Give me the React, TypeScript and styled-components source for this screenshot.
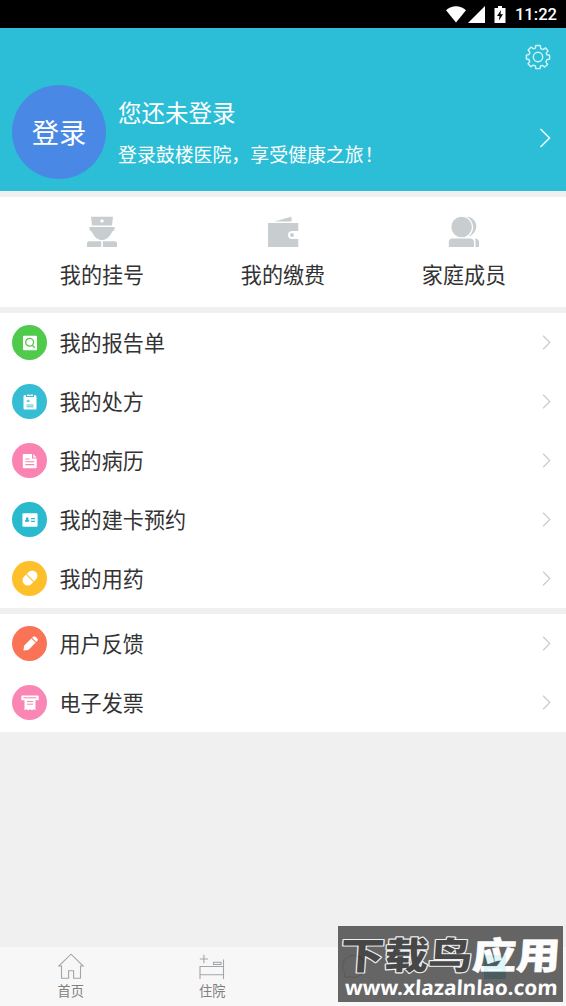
import React from 'react';
import styled, { createGlobalStyle } from 'styled-components';

const GlobalStyle = createGlobalStyle`
    * {
        box-sizing: border-box;
    }

    body {
        margin: 0;
        background-color: #f0f0f0;
        font-family: 'Noto Sans CJK SC', 'Noto Sans', sans-serif;
    }

    svg {
        display: block;
        flex-shrink: 0;
    }
`;

const Screen = styled.div`
    position: relative;
    display: flex;
    flex-direction: column;
    height: 1006px;
    overflow: hidden;
    background-color: #f0f0f0;
`;

const StatusBar = styled.div`
    display: flex;
    align-items: center;
    justify-content: flex-end;
    height: 28px;
    padding-right: 9px;
    background-color: #000;
`;

const Clock = styled.span`
    margin-left: 8px;
    padding-top: 2px;
    font-family: Roboto, sans-serif;
    font-size: 16.6px;
    font-weight: 500;
    line-height: 26px;
    color: #fff;
`;

const Header = styled.header`
    height: 163px;
    padding: 16px 15px 0 12px;
    background-color: #2cbed6;
`;

const HeaderTop = styled.div`
    display: flex;
    justify-content: flex-end;
    height: 41px;
`;

const Profile = styled.div`
    display: flex;
    align-items: center;
    height: 94px;
`;

const Avatar = styled.div`
    display: flex;
    align-items: center;
    justify-content: center;
    width: 94px;
    height: 94px;
    padding-bottom: 2px;
    border-radius: 50%;
    background-color: #4a88e5;
    font-size: 27.3px;
    line-height: 92px;
    color: #fff;
`;

const ProfileText = styled.div`
    flex: 1;
    margin-left: 12px;
    white-space: nowrap;
    color: #fff;
`;

const ProfileName = styled.div`
    font-size: 23.5px;
    line-height: 42px;
`;

const ProfileHint = styled.div`
    padding-top: 1px;
    font-size: 18.9px;
    line-height: 39px;
`;

const Exclamation = styled.span`
    padding-left: 1px;
    font-feature-settings: 'halt';
`;

const HeaderArrow = styled.div`
    padding: 11px 0 0;
`;

const QuickBar = styled.section`
    display: grid;
    grid-template-columns: repeat(3, 181px);
    justify-content: center;
    height: 110px;
    margin-top: 6px;
    padding-top: 18px;
    background-color: #fff;
`;

const QuickItem = styled.div`
    display: flex;
    flex-direction: column;
    align-items: center;
`;

const QuickLabel = styled.span`
    margin-top: 7px;
    font-size: 21.1px;
    line-height: 36px;
    color: #333;
`;

const Menu = styled.section`
    margin-top: 6.4px;
    background-color: #fff;
`;

const MenuRow = styled.div`
    display: flex;
    align-items: center;
    height: 58.9px;
    padding: 0 15px 0 12px;
`;

const MenuIcon = styled.div<{ $color: string }>`
    display: flex;
    align-items: center;
    justify-content: center;
    width: 35px;
    height: 35px;
    border-radius: 50%;
    background-color: ${({ $color }) => $color};
`;

const MenuLabel = styled.span`
    flex: 1;
    margin-left: 12.5px;
    padding-bottom: 1.2px;
    font-size: 21.1px;
    line-height: 36px;
    color: #333;
`;

const TabBar = styled.nav`
    display: grid;
    grid-template-columns: repeat(4, 1fr);
    height: 59px;
    margin-top: auto;
    padding-top: 6px;
    background-color: #f7f7f7;
`;

const Tab = styled.div`
    display: flex;
    flex-direction: column;
    align-items: center;
`;

const TabLabel = styled.span`
    font-size: 13.2px;
    line-height: 22px;
    color: #808080;
`;

const Watermark = styled.div`
    position: absolute;
    left: 338px;
    top: 926px;
    width: 225px;
    height: 76px;
    background-color: #4e4e4e;
    opacity: 0.86;
`;

const PATH_BG = '#c8cdd0';

const WifiIcon = () => (
    <svg width="20" height="17" viewBox="0 0 20 17">
        <path d="M0 4.2C6 -1 14 -1 20 4.2L10 16.5Z" fill="#fff" />
    </svg>
);

const SignalIcon = () => (
    <svg width="19" height="17" viewBox="-2 0 19 17">
        <path d="M0 17L17 0V17Z" fill="#fff" />
    </svg>
);

const BatteryIcon = () => (
    <svg width="22" height="17" viewBox="-9 0 22 17">
        <path d="M4 0H8V2H11.5V17H.5V2H4Z" fill="#fff" />
        <path d="M7 4L3 10H5.5L5 14.5L9 8.2H6.5Z" fill="#000" />
    </svg>
);

const GearIcon = () => (
    <svg width="26" height="26" viewBox="0 0 26 26" fill="none" stroke="#d5f5fa" strokeWidth="1.4" strokeLinejoin="round">
        <path d="M10.8 1.5H15.2L15.8 4.6L18 5.6L20.6 3.8L23 7L21.2 9.1L21.8 10.8L24.6 11.2V15.1L21.9 15.7L20.9 17.9L22.6 20.5L19.6 23L17.3 21.4L15.5 22L15 24.6H10.9L10.4 22L8.2 21.1L5.9 22.8L3 19.8L4.7 17.5L4 15.5L1.4 15V11.1L4 10.5L4.9 8.4L3.2 6L6.2 3.1L8.5 4.8L10.3 4.1Z" />
        <circle cx="13" cy="13" r="4.7" />
    </svg>
);

const Chevron = ({ size, color, weight }: { size: number; color: string; weight: number }) => (
    <svg width={size * 0.6} height={size} viewBox="0 0 12 20" fill="none" stroke={color} strokeWidth={weight}>
        <path d="M1.5 1L10.5 10L1.5 19" />
    </svg>
);

const NurseIcon = () => (
    <svg width="32" height="34" viewBox="0 0 32 34" fill={PATH_BG}>
        <path fillRule="evenodd" d="M5 1.8H27L26 10.5H6ZM16 4.2A1.7 1.7 0 1 0 16 7.6A1.7 1.7 0 1 0 16 4.2Z" />
        <path d="M4.5 12H27.5Q29.5 12.2 28.5 14Q28.3 16.2 26 16.7C24 22 20 25 16 25C12 25 8 22 6 16.7Q3.7 16.2 3.5 14Q2.5 12.2 4.5 12Z" />
        <path d="M3 26.3H15.2V32H1V28.3Q1 26.3 3 26.3ZM16.8 26.3H29Q31 26.3 31 28.3V32H16.8Z" />
    </svg>
);

const WalletIcon = () => (
    <svg width="32" height="34" viewBox="0 0 32 34" fill={PATH_BG}>
        <path d="M7.5 6.6L24.5 1.8V6.6Z" />
        <path d="M1 8H31.3V16H25.5Q21 16.2 21 20Q21 23.8 25.5 24H31.3V32H1Z" />
        <circle cx="25" cy="20" r="1.9" />
    </svg>
);

const FamilyIcon = () => (
    <svg width="32" height="34" viewBox="0 0 32 34" fill={PATH_BG}>
        <circle cx="13.6" cy="12" r="10.3" />
        <path d="M18.5 1.8C31 2.5 31.5 18 20.5 21.8C27.5 16 26.5 6 18.5 1.8Z" />
        <path d="M4.5 23.5H22Q26 23.5 26 27V32H.8V27Q.8 23.5 4.5 23.5ZM27 23.5Q31 23.8 31 27.2V32H27.5V26.5Q27.5 24.8 27 23.5Z" />
    </svg>
);

const ReportGlyph = ({ color }: { color: string }) => (
    <svg width="16" height="16" viewBox="0 0 16 16">
        <rect x="1" y=".7" width="14" height="14.6" rx="1" fill="#fff" />
        <g fill="none" stroke={color} strokeWidth="1.3">
            <circle cx="7.6" cy="7.2" r="3.9" />
            <path d="M10.2 10.2L12.8 12.8" />
        </g>
    </svg>
);

const PrescriptionGlyph = ({ color }: { color: string }) => (
    <svg width="16" height="16" viewBox="0 0 16 16">
        <path d="M2.5 1.2H4V3H12V1.2H13.3Q14.5 1.2 14.5 2.4V14.3Q14.5 15.5 13.3 15.5H2.7Q1.5 15.5 1.5 14.3V2.2Q1.5 1.2 2.5 1.2ZM5 .5H7L8 1.2L9 .5H11V2H5Z" fill="#fff" />
        <path d="M4.5 7H8M6 5.7V8.3M4.5 11H11.5M4.5 12.8H11.5" stroke={color} strokeWidth=".9" />
    </svg>
);

const RecordGlyph = ({ color }: { color: string }) => (
    <svg width="16" height="16" viewBox="0 0 16 16">
        <path d="M1.7 1H10V5.5H14.7V14.3Q14.7 15.2 13.8 15.2H1.7Q.8 15.2 .8 14.3V1.8Q.8 1 1.7 1ZM11.2 1L14.7 4.4H11.2Z" fill="#fff" />
        <path d="M3.3 6H7.5M3.3 8.7H12.3M3.3 11.6H12.3" stroke={color} strokeWidth="1.1" />
    </svg>
);

const CardGlyph = ({ color }: { color: string }) => (
    <svg width="16" height="16" viewBox="0 0 16 16">
        <rect x=".4" y="1.3" width="15.2" height="13.4" rx="1.2" fill="#fff" />
        <path d="M4 5.5H6.4V8H7.2V9.8H3V8H4ZM9 6H13V7.2H9ZM9 8.7H13V9.9H9Z" fill={color} />
    </svg>
);

const PillGlyph = ({ color }: { color: string }) => (
    <svg width="16" height="16" viewBox="0 0 16 16">
        <g transform="rotate(-45 8 8)">
            <rect x="-.4" y="2.8" width="16.8" height="10.4" rx="5.2" fill="#fff" />
        </g>
        <path d="M4.2 4.2L11.8 11.8" stroke={color} strokeWidth="1.1" />
    </svg>
);

const PencilGlyph = ({ color }: { color: string }) => (
    <svg width="16" height="16" viewBox="0 0 16 16">
        <g transform="rotate(-45 8 8)">
            <path d="M-1.2 8L2.6 5H15Q17 5 17 7V9Q17 11 15 11H2.6Z" fill="#fff" />
            <path d="M13.4 5V11" stroke={color} strokeWidth="1" />
        </g>
    </svg>
);

const InvoiceGlyph = ({ color }: { color: string }) => (
    <svg width="18" height="16" viewBox="0 0 18 16">
        <path d="M1.2 .5H16.8Q17.7 .5 17.7 1.4V5.3H14.5V15.3L12.7 14.2L10.9 15.3L9 14.2L7.1 15.3L5.3 14.2L3.5 15.3V5.3H.3V1.4Q.3 .5 1.2 .5Z" fill="#fff" />
        <path d="M2.5 2.8H15.5M6 6.5H12M6 9.2H12" stroke={color} strokeWidth="1" />
    </svg>
);

const HomeIcon = () => (
    <svg width="26" height="27" viewBox="0 0 26 27" fill="none" stroke="#a3a6a8" strokeWidth="1.1">
        <path d="M3.5 13H.8L13 1.2L25.2 13H22.5V25.3H15.6V17.8H10.6V25.3H3.5Z" />
    </svg>
);

const BedIcon = () => (
    <svg width="26" height="27" viewBox="0 0 26 27" fill="none" stroke="#a3a6a8" strokeWidth="1.1">
        <path d="M.8 6H9M4.9 1.7V10.3M24.5 6.5V26M1 26V13.5H24.5M1 21.8H24.5" />
        <rect x="14.5" y="9.3" width="7.5" height="2.2" />
    </svg>
);

const ChatIcon = () => (
    <svg width="26" height="27" viewBox="0 0 26 27" fill="none" stroke="#a3a6a8" strokeWidth="1.1">
        <path d="M3 24.3L4 20A11 11 0 1 1 9.5 23.8Z" />
    </svg>
);

const MineIcon = () => (
    <svg width="24" height="27" viewBox="0 0 24 27">
        <path d="M1 2H23V26H1Z" fill="#2cbed6" />
        <path d="M5 17H19" stroke="#fff" strokeWidth="1.2" />
    </svg>
);

const quickItems = [
    { label: '我的挂号', Icon: NurseIcon },
    { label: '我的缴费', Icon: WalletIcon },
    { label: '家庭成员', Icon: FamilyIcon },
];

const menus = [
    [
        { label: '我的报告单', color: '#4fca4b', Glyph: ReportGlyph },
        { label: '我的处方', color: '#35bdd4', Glyph: PrescriptionGlyph },
        { label: '我的病历', color: '#fb83b2', Glyph: RecordGlyph },
        { label: '我的建卡预约', color: '#29bace', Glyph: CardGlyph },
        { label: '我的用药', color: '#fdc02b', Glyph: PillGlyph },
    ],
    [
        { label: '用户反馈', color: '#fb7356', Glyph: PencilGlyph },
        { label: '电子发票', color: '#f986b4', Glyph: InvoiceGlyph },
    ],
];

const App: React.FC = () => {
    return (
        <>
            <GlobalStyle />
            <Screen>
                <StatusBar>
                    <WifiIcon />
                    <SignalIcon />
                    <BatteryIcon />
                    <Clock>11:22</Clock>
                </StatusBar>
                <Header>
                    <HeaderTop>
                        <GearIcon />
                    </HeaderTop>
                    <Profile>
                        <Avatar>登录</Avatar>
                        <ProfileText>
                            <ProfileName>您还未登录</ProfileName>
                            <ProfileHint>
                                登录鼓楼医院，享受健康之旅<Exclamation>！</Exclamation>
                            </ProfileHint>
                        </ProfileText>
                        <HeaderArrow>
                            <Chevron size={20} color="#e4fafd" weight={1.6} />
                        </HeaderArrow>
                    </Profile>
                </Header>
                <QuickBar>
                    {quickItems.map(({ label, Icon }) => (
                        <QuickItem key={label}>
                            <Icon />
                            <QuickLabel>{label}</QuickLabel>
                        </QuickItem>
                    ))}
                </QuickBar>
                {menus.map((rows, index) => (
                    <Menu key={index}>
                        {rows.map(({ label, color, Glyph }) => (
                            <MenuRow key={label}>
                                <MenuIcon $color={color}>
                                    <Glyph color={color} />
                                </MenuIcon>
                                <MenuLabel>{label}</MenuLabel>
                                <Chevron size={15} color="#c9c9c9" weight={1.5} />
                            </MenuRow>
                        ))}
                    </Menu>
                ))}
                <TabBar>
                    <Tab>
                        <HomeIcon />
                        <TabLabel>首页</TabLabel>
                    </Tab>
                    <Tab>
                        <BedIcon />
                        <TabLabel>住院</TabLabel>
                    </Tab>
                    <Tab>
                        <ChatIcon />
                    </Tab>
                    <Tab>
                        <MineIcon />
                    </Tab>
                </TabBar>
                <Watermark>
                    <svg width="225" height="76" viewBox="0 0 225 76">
                        <g
                            fontFamily="'Noto Sans CJK SC', sans-serif"
                            fontWeight="900"
                            fontSize="44"
                            strokeLinejoin="round"
                            transform="translate(-1.5 43) skewX(-4) scale(1 .84)"
                        >
                            <text x="3" y="0" textLength="132" fill="#2c2c2c" stroke="#f0f0f0" strokeWidth="2.6" paintOrder="stroke">
                                下载鸟
                            </text>
                            <text x="135" y="0" textLength="88" fill="#fff" stroke="#fff" strokeWidth=".6">
                                应用
                            </text>
                        </g>
                        <text x="10" y="69" textLength="213" lengthAdjust="spacingAndGlyphs" fill="#fff" fontFamily="'Noto Sans', sans-serif" fontWeight="700" fontSize="20.5" transform="skewX(-3)">
                            www.xlazalnlao.com
                        </text>
                    </svg>
                </Watermark>
            </Screen>
        </>
    );
};

export default App;
